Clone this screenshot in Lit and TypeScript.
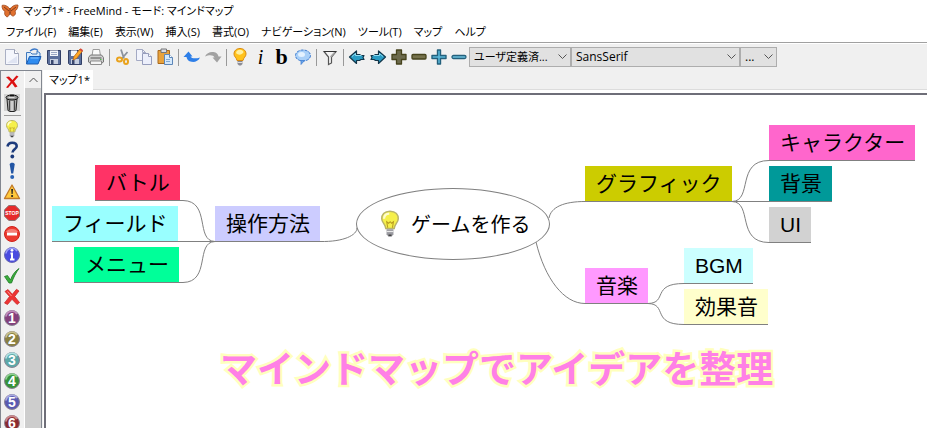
import { LitElement, html, css, svg } from "lit";
import { customElement, property } from "lit/decorators.js";
import { styleMap } from "lit/directives/style-map.js";

const bulb = svg`
  <path d="M10 1.5c-4 0-6 2.6-6 5.600c0 2.600 2.600 3.600 3 6.400h6c.4-2.800 3-3.800 3-6.400c0-3-2-5.600-6-5.600z" fill="#ffc21c" stroke="#d98a10" stroke-width="1"/>
  <path d="M6 6c.3-2.400 2-3.300 4-3.300s3.300 1 3.500 2.600c-1.500 2.400-5 3.600-7.500.7z" fill="#fff0a0"/>
  <path d="M7.500 14h5v3l-1.500 1.500h-2l-1.500-1.500z" fill="#8c8c94"/><path d="M7.500 15.500h5" stroke="#ddd"/>`;

const paleBulb = svg`
  <path d="M10 1.500c-4 0-5.500 2.500-5.500 5c0 2.600 2.500 3.500 2.700 6.500h5.600c.2-3 2.700-3.900 2.700-6.500c0-2.500-1.500-5-5.500-5z" fill="#f6f04a" stroke="#b9b46a"/>
  <path d="M6 6.500c.2-2.500 1.600-3.500 3.500-3.500" fill="none" stroke="#fffdd0" stroke-width="1.500"/>
  <path d="M8.500 12.500l-.7-4l1.300 1l1-1l1 1l1.200-1l-.7 4" fill="none" stroke="#b89b20" stroke-width=".7"/>
  <path d="M7.700 13.500h4.600v3.300l-1.300 1.700h-2l-1.300-1.700z" fill="#9a9aa0"/><path d="M7.700 15h4.600" stroke="#e8e8e8" stroke-width=".8"/><path d="M9 17.500h2" stroke="#444"/>`;

const arrow = svg`<path d="M2.500 10l7-6v3.500h3l1.500 1h3l-1 2l1 2h-3l-1.500 1h-3v3z" fill="#2a9cc4" stroke="#12364a" stroke-width="1.200" stroke-linejoin="round"/><path d="M5 9.500l3.500-3v2h6" fill="none" stroke="#8fdcf2"/>`;

const plusPath = "M7.500 3h5v4.500h4.500v5h-4.500v4.500h-5v-4.500h-4.500v-5h4.500z";

const TOOL: Record<string, unknown> = {
  new: svg`<path d="M3.500 2.500h9l4 4v11h-13z" fill="#f4f6fc" stroke="#aab0c4"/><path d="M12.500 2.500v4h4" fill="#fff" stroke="#9aa0b4"/><path d="M5 16h10v-7z" fill="#dfe4f2"/>`,
  open: svg`<path d="M3.500 16.500v-11h4l1.500 1.500h5v-3l3 2v7z" fill="#d9ebfb" stroke="#3f78bd"/><path d="M7 4c3-2.500 6-2.500 8-.5" fill="none" stroke="#3a78c8" stroke-width="1.500"/><path d="M3.500 17l3-7.500h11.500l-3 7.500z" fill="#2f8cf0" stroke="#1c5cb0"/><path d="M7.500 11h8" stroke="#8cc6ff"/>`,
  save: svg`<path d="M3.500 3.500h13v14h-12l-1-1z" fill="#5b6f9c" stroke="#323f66"/><path d="M6 3.500h8v5.500h-8z" fill="#f2f5fb"/><path d="M7 5.500h6M7 7.500h6" stroke="#9aa7c4"/><path d="M6 12h8v5h-8z" fill="#c5cee0"/><path d="M7 13h2.500v4h-2.500z" fill="#39476e"/>`,
  saveas: svg`<path d="M3.500 3.500h13v14h-12l-1-1z" fill="#5b6f9c" stroke="#323f66"/><path d="M6 3.500h6v5.500h-6z" fill="#f2f5fb"/><path d="M6 12h8v5h-8z" fill="#c5cee0"/><path d="M7 13h2.500v4h-2.500z" fill="#39476e"/><path d="M8 13l1-3.500l6-7.500l2.500 2l-6 7.500z" fill="#ffa726" stroke="#b5651d" stroke-width=".8"/><path d="M15 2l2.500 2" stroke="#d84a3a" stroke-width="2"/>`,
  print: svg`<path d="M6 9l1-6.500h6.500l1 6.500z" fill="#fafafa" stroke="#9c9c9c"/><path d="M2.500 10.500l2-2.500h11l2 2.500v4.500l-1.500 1h-12l-1.500-1z" fill="#cfcfcf" stroke="#777"/><path d="M4.500 14h11v3.500h-11z" fill="#f4f4f4" stroke="#8c8c8c"/><path d="M4.500 11h11" stroke="#555"/><path d="M14 12.500h1.500" stroke="#4bc04b"/>`,
  cut: svg`<path d="M8 2.500l3 9M14.500 5l-6 7" stroke="#8b929c" stroke-width="1.800"/><ellipse cx="6.500" cy="12.500" rx="2.500" ry="2" fill="none" stroke="#e9a21c" stroke-width="2"/><ellipse cx="13" cy="14.500" rx="2" ry="2.600" fill="none" stroke="#e9a21c" stroke-width="2"/>`,
  copy: svg`<path d="M2.500 2.500h6l3 3v8h-9z" fill="#f2f4fc" stroke="#a4aac4"/><path d="M8.500 2.500v3h3" fill="none" stroke="#a4aac4"/><path d="M8.500 6.500h6l3 3v8h-9z" fill="#eceffb" stroke="#969dbc"/><path d="M14.500 6.500v3h3" fill="#fff" stroke="#969dbc"/>`,
  paste: svg`<path d="M3 3.500h11.500v13h-11.500z" fill="#e8a23c" stroke="#a8681c"/><path d="M6 2h5.500v3.500h-5.500z" fill="#d8dbe4" stroke="#777"/><path d="M9.500 7.500h5l3 3v7h-8z" fill="#d4e8fb" stroke="#5d86b8"/><path d="M14.500 7.500v3h3" fill="#fff" stroke="#5d86b8"/><path d="M11 12.500h4M11 14.500h4" stroke="#82a9d4"/>`,
  undo: svg`<path d="M1.500 10l5-5.500l4 5h-2c1 2 5 2.500 9.500 1c-1.500 3.500-5 4.800-8.500 4.300c-3-.4-4.500-2-5-4.800z" fill="#2e7fe8"/>`,
  redo: svg`<path d="M18.500 9.500l-4.500 6l-4.500-5h2c-1-2.500-5-3-9.500-1c1.500-3.500 5-5 8.500-4.500c3 .4 4.500 2 5 4.500z" fill="#a2a2a2"/>`,
  bulb,
  cloud: svg`<ellipse cx="10" cy="8.500" rx="7.500" ry="5.500" fill="#a9d0f8" stroke="#3d7bd0" stroke-dasharray="3 1"/><path d="M8 13.500v4l3.500-4z" fill="#6aa6ea" stroke="#3d7bd0" stroke-width=".7"/><ellipse cx="8.500" cy="7.500" rx="3.500" ry="2.500" fill="#e4f2ff"/>`,
  filter: svg`<path d="M4 4.500h12l-4.500 5.500v6l-3 1.500v-7.500z" fill="#f4f4f4" stroke="#555" stroke-width="1.200"/><path d="M4 4.500h12" stroke="#333"/><path d="M10.500 10l4-4.500" stroke="#aaa" stroke-width="1.500"/>`,
  prev: arrow,
  next: svg`<g transform="matrix(-1 0 0 1 20 0)">${arrow}</g>`,
  plusOlive: svg`<path d=${plusPath} fill="#6c6a4c" stroke="#46431c" stroke-width="1.300" stroke-linejoin="round"/>`,
  minusOlive: svg`<rect x="3" y="7.500" width="14" height="4.500" rx="1" fill="#76724c" stroke="#46431c" stroke-width="1.300"/>`,
  plusBlue: svg`<path d="M8.500 3h3v5.500h5.500v3h-5.500v5.500h-3v-5.500h-5.500v-3h5.500z" fill="#58b4d6" stroke="#23607c" stroke-width="1.400" stroke-linejoin="round"/>`,
  minusBlue: svg`<rect x="3" y="8.500" width="14" height="3" rx="1.500" fill="#6cc0de" stroke="#23607c" stroke-width="1.300"/>`,
};

const ball = (color: string, light: string, n: string) => svg`
  <circle cx="10" cy="10" r="7.500" fill=${color} stroke="#8a8494" stroke-width="1"/>
  <path d="M4 8.500a6 6 0 0 1 11-2.500" fill="none" stroke=${light} stroke-width="1.800"/>
  <text class="num" x="10" y="15" text-anchor="middle">${n}</text>`;

const SIDE: Record<string, unknown> = {
  remove: svg`<path d="M4 5l3-.5l3.500 3.500l4-4.500l2 1l-4.500 5l3.500 5l-2.500 1l-3-4.200l-4 4.700l-2-.5l4.700-5.700z" fill="#dc1010"/>`,
  trash: svg`<path d="M5 6h10l-1 11.500l-2 1h-4l-2-1z" fill="#aaa" stroke="#222"/><path d="M7.500 7.500v10M12.500 7.500v10" stroke="#444"/><path d="M10 7.500v10.500" stroke="#f2f2f2"/><ellipse cx="10" cy="4.500" rx="6" ry="2.500" fill="#999" stroke="#111"/><path d="M8 2.500h4" stroke="#111" stroke-width="1.500"/><path d="M6.500 4.500h6" stroke="#ddd"/>`,
  idea: paleBulb,
  question: svg`<path d="M5.500 6.500c.5-3 2.500-3.800 4.700-3.800c2.800 0 4.500 1.300 4.500 3.500c0 3-4.200 3.200-4.200 6.300" fill="none" stroke="#1c3b7c" stroke-width="2.600"/><circle cx="10.300" cy="16.500" r="1.900" fill="#1c3b7c"/>`,
  bang: svg`<path d="M7.700 3.500c0-2.200 5-2.200 5 0l-1.500 9h-2z" fill="#2255a4"/><circle cx="10.200" cy="16" r="2" fill="#2a62b4"/>`,
  warn: svg`<path d="M10 3l7.500 13.500h-15z" fill="#ffc93c" stroke="#c07a28" stroke-width="1.300" stroke-linejoin="round"/><path d="M9.200 7h1.800l-.4 5h-1z" fill="#222"/><circle cx="10.100" cy="14" r="1.100" fill="#222"/>`,
  stop: svg`<path d="M6.800 2.500h6.400l4.300 4.300v6.400l-4.300 4.300h-6.400l-4.300-4.300v-6.400z" fill="#e62a2a" stroke="#8a7474"/><text class="stop" x="10" y="12" text-anchor="middle">STOP</text>`,
  deny: svg`<circle cx="10" cy="10" r="7.500" fill="#ec3a30" stroke="#d02018"/><path d="M4 8a6.500 5 0 0 1 12 0" fill="#f58078"/><path d="M5 8.500h10v3h-10z" fill="#fff"/>`,
  info: svg`<circle cx="10" cy="10" r="7.500" fill="#4a4ce0" stroke="#6a6ab0"/><path d="M4 8.500a6 6 0 0 1 11-2.500" fill="none" stroke="#9a9cf8" stroke-width="1.500"/><path d="M8.500 8.500h1.500v6M8 14.500h4.500" fill="none" stroke="#fff" stroke-width="2"/><circle cx="10" cy="5.300" r="1.400" fill="#fff"/>`,
  ok: svg`<path d="M2.500 10.500l3-1l3 4.500c1.500-4.500 4-8.500 8.500-11.500c-3 4-5.500 9-7.500 14.500h-2.500z" fill="#3cae3c" stroke="#1d7a24" stroke-width=".8"/>`,
  cancel: svg`<path d="M3 4.500l3-2l4.300 4.800l4.200-5l2.500 1.700l-4.300 5.500l4.800 6l-2.500 2l-5-5.200l-4.500 5.200l-3-1.500l5-6.500z" fill="#ee3434" stroke="#c42424" stroke-width=".7"/><path d="M5.500 4.500l4 4.500" stroke="#ff9a90"/>`,
  n1: ball("#84407c", "#c08cba", "1"),
  n2: ball("#8a8040", "#c8c08c", "2"),
  n3: ball("#5ca8a8", "#aee0e0", "3"),
  n4: ball("#36923a", "#8cd08e", "4"),
  n5: ball("#5a5ab0", "#a8a8e0", "5"),
  n6: ball("#8a2a30", "#cc8a8c", "6"),
};

const TOOL_GROUPS: [string, string][][] = [
  [["new", "新規"], ["open", "開く"], ["save", "保存"], ["saveas", "別名で保存"], ["print", "印刷"]],
  [["cut", "切り取り"], ["copy", "コピー"], ["paste", "貼り付け"]],
  [["undo", "元に戻す"], ["redo", "やり直し"]],
  [["bulb", "アイコン"], ["italic", "斜体"], ["bold", "太字"], ["cloud", "雲"]],
  [["filter", "フィルター"]],
  [["prev", "前へ"], ["next", "次へ"], ["plusOlive", "すべて展開"]],
];
const FOLDS: [string, string][] = [["minusOlive", "すべて折りたたむ"], ["plusBlue", "展開"], ["minusBlue", "折りたたむ"]];
const MENUS = ["ファイル(F)", "編集(E)", "表示(W)", "挿入(S)", "書式(O)", "ナビゲーション(N)", "ツール(T)", "マップ", "ヘルプ"];

interface MapNode { text: string; x: number; y: number; color: string }
const NODES: MapNode[] = [
  { text: "バトル", x: 49, y: 70, color: "#ff3366" },
  { text: "フィールド", x: 6, y: 111, color: "#99ffff" },
  { text: "メニュー", x: 28, y: 152, color: "#00ff99" },
  { text: "操作方法", x: 169, y: 111, color: "#ccccff" },
  { text: "グラフィック", x: 539, y: 71, color: "#cccc00" },
  { text: "キャラクター", x: 723, y: 30, color: "#ff66cc" },
  { text: "背景", x: 723, y: 71, color: "#009999" },
  { text: "UI", x: 723, y: 112, color: "#d2d2d2" },
  { text: "音楽", x: 539, y: 173, color: "#ff99ff" },
  { text: "BGM", x: 638, y: 153, color: "#ccffff" },
  { text: "効果音", x: 638, y: 194, color: "#ffffcc" },
];
const EDGES = [
  "M132 105.500h5C165 106 149 146 169 146.500",
  "M131 146.500h38",
  "M132 187.500h5C165 187 149 147 169 146.500",
  "M274 146.500C298 147 311 140 311 133",
  "M503 123C505 112 518 106.500 539 106.500",
  "M490 147C499 184 518 208.500 539 208.500",
  "M686 106.500C707 106 690 65.500 723 65.500",
  "M686 106.500h37",
  "M686 106.500C707 107 690 147.500 723 147.500",
  "M602 208.500C622 208 605 188.500 638 188.500",
  "M602 208.500C622 209 605 229.500 638 229.500",
];

@customElement("tool-icon")
class ToolIcon extends LitElement {
  @property() name = "";
  static styles = css`
    :host { display: block; width: 20px; height: 20px; }
    .icon { display: block; width: 100%; height: 100%; }
    .num { font: 700 14px "Liberation Sans", Arial, sans-serif; fill: #fff; }
    .stop { font: 700 5px "Liberation Sans", Arial, sans-serif; fill: #fff; }
  `;
  render() {
    return html`<svg class="icon" viewBox="0 0 20 20" aria-hidden="true">${TOOL[this.name] ?? SIDE[this.name]}</svg>`;
  }
}

@customElement("app-root")
class AppRoot extends LitElement {
  static styles = css`
    :host {
      display: flex; flex-direction: column; height: 100vh; overflow: hidden;
      background: #fff; color: #000;
      font: 11px/16px "Open Sans", "Noto Sans CJK JP", sans-serif;
    }
    * { box-sizing: border-box; }
    button { border: 0; background: none; padding: 0; margin: 0; font: inherit; color: inherit; }
    .title { display: flex; align-items: center; gap: 4px; height: 22px; padding-left: 1px; font-feature-settings: "palt"; }
    .title h1 { margin: 0; font: inherit; white-space: nowrap; }
    .logo { width: 18px; height: 16px; }
    .menus { display: flex; gap: 12px; height: 21px; padding: 0 6px; align-items: center; border-bottom: 1px solid #a0a0a0; font-feature-settings: "palt"; }
    .menus button { white-space: nowrap; }
    .toolbar { display: flex; align-items: center; height: 26px; margin-top: 1px; padding-left: 1px; background: #f0f0f0; }
    .tool { display: flex; width: 21px; height: 20px; align-items: center; justify-content: center; }
    .fold { width: 20px; }
    .sep { width: 6px; height: 17px; background: linear-gradient(#999, #999) center / 1px 100% no-repeat; }
    .glyph { font: 700 22px/18px "Liberation Serif", serif; }
    .italic { font-style: italic; font-weight: 400; font-size: 20px; }
    .combo { position: relative; height: 20px; width: 102px; }
    .family { width: 169px; }
    .size { width: 37px; }
    .combo select { appearance: none; width: 100%; height: 100%; padding: 0 4px; border: 1px solid #adadad; border-radius: 0;
      background: #e1e1e1; color: #000; font: 12px/16px "Open Sans", "Noto Sans CJK JP", sans-serif; font-feature-settings: "palt"; }
    .combo .style-value { font-size: 11px; }
    .combo svg { position: absolute; right: 4px; top: 7px; width: 9px; height: 6px; pointer-events: none; }
    .chev { fill: none; stroke: #555; stroke-width: 1; }
    .body { display: flex; flex: 1; min-height: 0; background: #f0f0f0; }
    .side { display: flex; width: 42px; flex: none; border: solid #828790; border-width: 1px 1px 0; overflow: hidden; }
    .icons { display: flex; flex-direction: column; align-items: flex-start; flex: 1; background: #f0f0f0; border-right: 1px solid #fff; }
    .icons button { display: flex; flex: none; align-items: center; justify-content: center; height: 21px; width: 22px; }
    .icons .trash { background: linear-gradient(#d2d2d2, #d2d2d2) center / 16px 17px no-repeat; }
    .rule { flex: none; width: 17px; height: 1px; margin: 2px 3px; background: #999; }
    .scroll { width: 16px; background: #cdcdcd; }
    .up { display: flex; width: 16px; height: 17px; align-items: center; justify-content: center; background: #f0f0f0; }
    .up svg { width: 9px; height: 6px; }
    .work { display: flex; flex-direction: column; flex: 1; min-width: 0; padding-left: 1px; }
    .tabs { display: flex; height: 20px; border-bottom: 1px solid #dcdcdc; }
    .tab { height: 20px; padding: 0 3px 0 6px; background: #fff; font-feature-settings: "palt"; }
    .pane { flex: 1; min-height: 0; padding: 3px 0 0 1px; background: #fff; }
    .canvas { position: relative; height: 100%; overflow: hidden; border: solid #6e6e78; border-width: 2px 0 0 2px; background: #fff; }
    .links { position: absolute; left: 0; top: 0; width: 100%; height: 100%; fill: none; stroke: #808080; }
    .node { position: absolute; height: 36px; padding: 0 10px 0 11px; background-clip: padding-box; border-bottom: 1px solid #808080;
      font: 400 21px/35px "Liberation Sans", "Noto Sans CJK JP", sans-serif; white-space: nowrap; }
    .root { position: absolute; left: 310px; top: 93px; width: 194px; height: 72px; display: flex; align-items: center; gap: 6px; padding-left: 18px;
      border: 1px solid #808080; border-radius: 50%; background: #fff; font: 400 20px/30px "Noto Sans CJK JP", sans-serif; white-space: nowrap; }
    .root tool-icon { width: 30px; height: 34px; }
    .caption { position: absolute; left: 174px; top: 245px; margin: 0; font: 700 37px/54px "Noto Sans CJK JP", sans-serif; white-space: nowrap;
      color: #ff80e6; -webkit-text-stroke: 5px #ffffbe; paint-order: stroke fill; }
  `;

  private tool([name, label]: [string, string], cls = "") {
    const inner = name === "italic" ? html`<span class="glyph italic">i</span>`
      : name === "bold" ? html`<span class="glyph">b</span>`
      : html`<tool-icon name=${name}></tool-icon>`;
    return html`<button class="tool ${cls}" aria-label=${label}>${inner}</button>`;
  }

  private combo(cls: string, label: string, value: string) {
    return html`<div class="combo ${cls}">
      <select class="${cls}-value" aria-label=${label}><option>${value}</option></select>
      <svg viewBox="0 0 9 6"><path class="chev" d="M.5 .5l4 4l4-4"/></svg>
    </div>`;
  }

  render() {
    return html`
      <header class="title">
        <svg class="logo" viewBox="0 0 18 16" aria-hidden="true">
          <path d="M9 6C7 3 3 1.500 1 2.500c0 3 1 5 3 6c-1 2 0 4.500 2 5.500c2-.5 2.500-3 3-5c.5 2 1.500 4.500 3.500 4c2-1 2.500-3 1.500-5c2-1 3-3.500 3-6c-3-.5-6 1-8 4z" fill="#e0702e" stroke="#a04a20" stroke-width=".8"/>
          <path d="M9 5v7M3 4l5 4M15 4l-5 4" stroke="#5a2410" stroke-width=".7"/>
        </svg>
        <h1>マップ1* - FreeMind - モード: マインドマップ</h1>
      </header>
      <nav class="menus">${MENUS.map((m) => html`<button>${m}</button>`)}</nav>
      <div class="toolbar" role="toolbar">
        ${TOOL_GROUPS.map((g, i) => html`${i ? html`<span class="sep"></span>` : ""}${g.map((t) => this.tool(t))}`)}
        ${FOLDS.map((t) => this.tool(t, "fold"))}
        ${this.combo("style", "スタイル", "ユーザ定義済...")}
        ${this.combo("family", "フォント", "SansSerif")}
        ${this.combo("size", "サイズ", "...")}
      </div>
      <div class="body">
        <aside class="side">
          <div class="icons">
            ${Object.keys(SIDE).map((k) => html`<button class=${k} aria-label=${k}><tool-icon name=${k}></tool-icon></button>
              ${k === "trash" ? html`<span class="rule"></span>` : ""}`)}
          </div>
          <div class="scroll"><button class="up" aria-label="上へ"><svg viewBox="0 0 9 6"><path class="chev" d="M.5 5l4-4l4 4"/></svg></button></div>
        </aside>
        <main class="work">
          <div class="tabs" role="tablist"><button class="tab" role="tab" aria-selected="true">マップ1*</button></div>
          <div class="pane">
            <div class="canvas">
              <svg class="links">${EDGES.map((d) => svg`<path d=${d}/>`)}</svg>
              ${NODES.map((n) => html`<div class="node" style=${styleMap({ left: `${n.x}px`, top: `${n.y}px`, backgroundColor: n.color })}>${n.text}</div>`)}
              <div class="root"><tool-icon name="idea"></tool-icon>ゲームを作る</div>
              <p class="caption">マインドマップでアイデアを整理</p>
            </div>
          </div>
        </main>
      </div>`;
  }
}
